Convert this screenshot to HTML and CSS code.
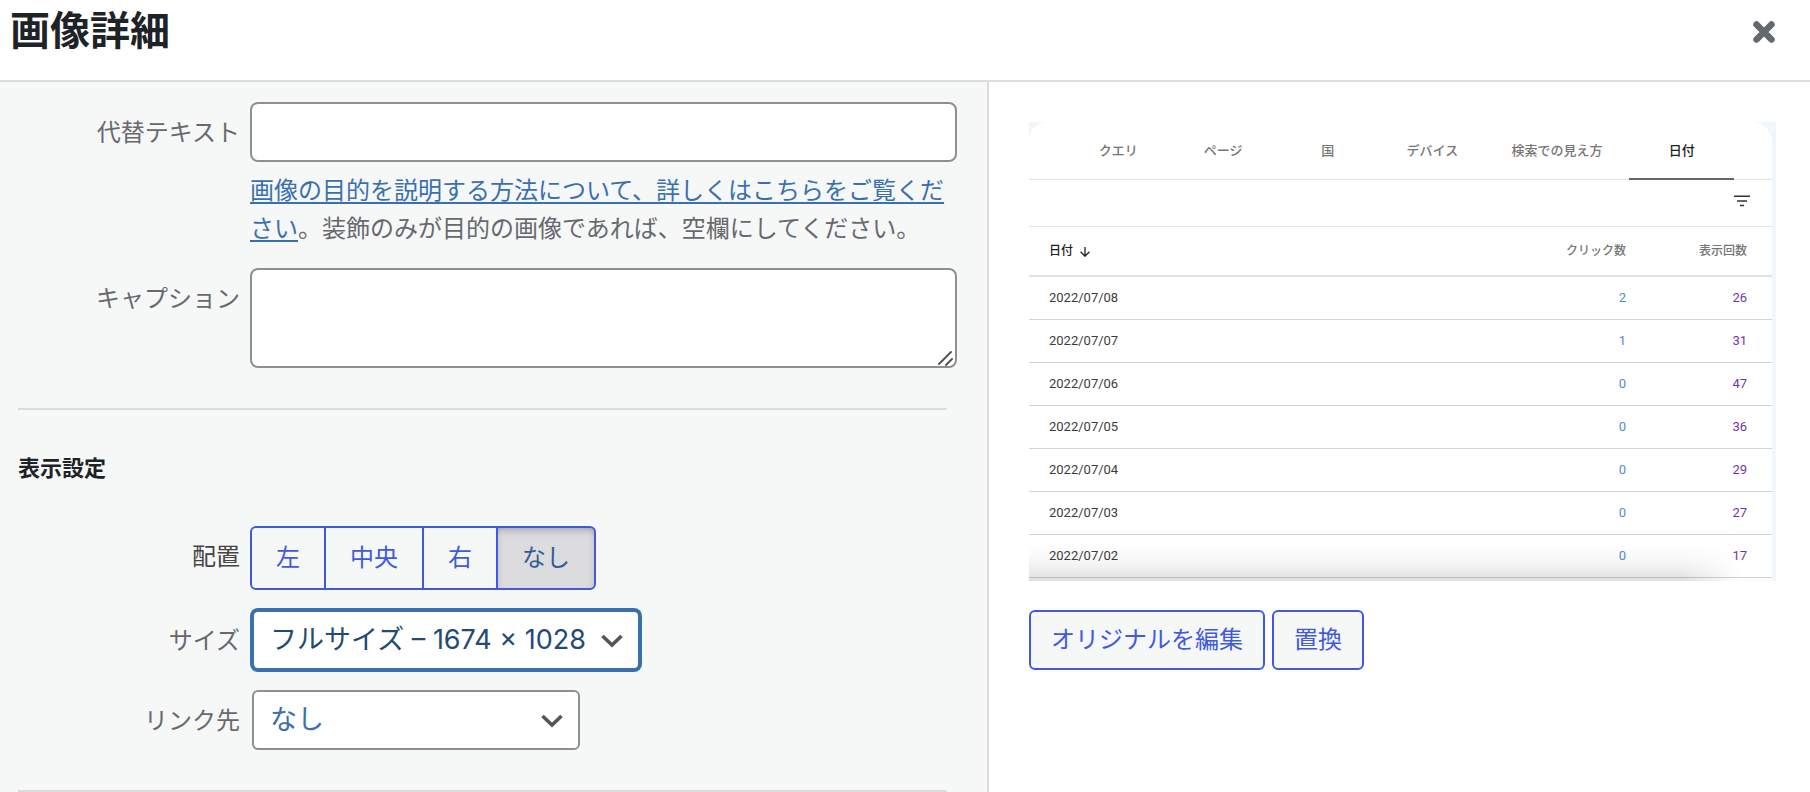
FILE: index.html
```html
<!DOCTYPE html>
<html lang="ja">
<head>
<meta charset="utf-8">
<meta name="viewport" content="width=device-width, initial-scale=1">
<title>画像詳細</title>
<link rel="stylesheet" href="styles.css">
</head>
<body>
<div class="modal">
  <header class="modal-header">
    <h1 class="modal-title">画像詳細</h1>
    <button class="modal-close" type="button" aria-label="閉じる">
      <svg viewBox="0 0 22 22" width="22" height="22" aria-hidden="true"><path d="M3.5 3.5l15 15M18.5 3.5l-15 15" fill="none" stroke="currentColor" stroke-width="5"/><path d="M3.5 3.5l15 15M18.5 3.5l-15 15" fill="none" stroke="currentColor" stroke-width="6.5" stroke-linecap="round"/></svg>
    </button>
  </header>
  <div class="modal-body">
    <form class="settings">
      <div class="field">
        <label class="field-label" for="alt">代替テキスト</label>
        <div class="field-control">
          <input class="text-input" id="alt" type="text">
          <p class="help"><a class="help-link" href="#">画像の目的を説明する方法について、詳しくはこちらをご覧ください</a>。装飾のみが目的の画像であれば、空欄にしてください。</p>
        </div>
      </div>
      <div class="field">
        <label class="field-label" for="caption">キャプション</label>
        <div class="field-control textarea-wrap">
          <textarea class="text-area" id="caption"></textarea>
          <svg class="grip" viewBox="0 0 16 16" width="16" height="16" aria-hidden="true"><path d="M2 14 14 2M9 15 15 9" fill="none" stroke="currentColor" stroke-width="2" stroke-linecap="round"/></svg>
        </div>
      </div>
      <hr class="divider">
      <h2 class="section-title">表示設定</h2>
      <div class="field">
        <span class="field-label field-label-dark" id="align-label">配置</span>
        <div class="button-group" role="group" aria-labelledby="align-label">
          <button class="group-button" type="button">左</button>
          <button class="group-button" type="button">中央</button>
          <button class="group-button" type="button">右</button>
          <button class="group-button group-button-active" type="button" aria-pressed="true">なし</button>
        </div>
      </div>
      <div class="field">
        <label class="field-label" for="size">サイズ</label>
        <div class="select-wrap">
          <select class="select select-size" id="size"><option>フルサイズ – 1674 × 1028</option></select>
          <svg class="chevron" viewBox="0 0 22 14" width="22" height="14" aria-hidden="true"><path d="M1.5 2 11 11 20.500 2" fill="none" stroke="currentColor" stroke-width="3.6"/></svg>
        </div>
      </div>
      <div class="field">
        <label class="field-label" for="link">リンク先</label>
        <div class="select-wrap">
          <select class="select select-link" id="link"><option>なし</option></select>
          <svg class="chevron" viewBox="0 0 22 14" width="22" height="14" aria-hidden="true"><path d="M1.5 2 11 11 20.500 2" fill="none" stroke="currentColor" stroke-width="3.6"/></svg>
        </div>
      </div>
      <hr class="divider">
    </form>
    <section class="preview">
      <figure class="shot">
        <div class="shot-card">
          <div class="tabs">
            <span class="tab">クエリ</span>
            <span class="tab">ページ</span>
            <span class="tab">国</span>
            <span class="tab">デバイス</span>
            <span class="tab tab-wide">検索での見え方</span>
            <span class="tab tab-active">日付</span>
          </div>
          <div class="filter-row">
            <svg viewBox="0 0 16 12" width="16" height="12" aria-hidden="true"><path d="M0 1.300h16M3 6h10M6 10.500h4" fill="none" stroke="currentColor" stroke-width="1.600"/></svg>
          </div>
          <table class="stats">
            <thead>
              <tr>
                <th class="col-date">日付 <svg class="sort" viewBox="0 0 10 10" width="10" height="10" aria-hidden="true"><path d="M5 0v9M.6 4.800 5 9.200l4.400-4.400" fill="none" stroke="currentColor" stroke-width="1.300"/></svg></th>
                <th class="col-clicks">クリック数</th>
                <th class="col-views">表示回数</th>
              </tr>
            </thead>
            <tbody>
              <tr><td>2022/07/08</td><td class="clicks">2</td><td class="views">26</td></tr>
              <tr><td>2022/07/07</td><td class="clicks">1</td><td class="views">31</td></tr>
              <tr><td>2022/07/06</td><td class="clicks">0</td><td class="views">47</td></tr>
              <tr><td>2022/07/05</td><td class="clicks">0</td><td class="views">36</td></tr>
              <tr><td>2022/07/04</td><td class="clicks">0</td><td class="views">29</td></tr>
              <tr><td>2022/07/03</td><td class="clicks">0</td><td class="views">27</td></tr>
              <tr><td>2022/07/02</td><td class="clicks">0</td><td class="views">17</td></tr>
            </tbody>
          </table>
          <div class="shot-shade"></div>
        </div>
      </figure>
      <div class="actions">
        <button class="action" type="button">オリジナルを編集</button>
        <button class="action" type="button">置換</button>
      </div>
    </section>
  </div>
</div>
</body>
</html>
```
FILE: styles.css
```css
* {
  box-sizing: border-box;
}

body {
  margin: 0;
  background: #fff;
  color: #1d2327;
  font-family: Inter, "Noto Sans CJK JP", sans-serif;
  font-size: 24px;
  line-height: 38px;
}

button,
input,
textarea,
select {
  font: inherit;
}

.modal {
  display: flex;
  flex-direction: column;
  min-height: 100vh;
}

.modal-header {
  display: flex;
  align-items: flex-start;
  justify-content: space-between;
  height: 82px;
  padding: 0 32px 0 10px;
  border-bottom: 2px solid #dcdcdc;
}

.modal-title {
  margin: 0;
  font-size: 40px;
  font-weight: 700;
  line-height: 62px;
}

.modal-close {
  display: flex;
  margin-top: 18px;
  padding: 3px;
  border: 0;
  background: none;
  color: #646970;
}

.modal-body {
  display: grid;
  flex: 1;
  grid-template-columns: minmax(0, 989fr) minmax(0, 821fr);
}

.settings {
  padding-top: 20px;
  border-right: 2px solid #dcdcdc;
  background: #f6f8f7;
}

.field {
  display: grid;
  grid-template-columns: 240px 1fr;
  column-gap: 10px;
  align-items: start;
  margin: 0 30px 20px 0;
}

.field-label {
  margin-top: 12px;
  color: #67696f;
  text-align: right;
}

.field-label-dark {
  color: #444;
}

.text-input,
.text-area {
  display: block;
  width: 100%;
  border: 2px solid #8d8f94;
  border-radius: 8px;
  background: #fff;
  outline: 0;
}

.text-input {
  height: 60px;
  padding: 0 16px;
}

.text-area {
  height: 100px;
  padding: 4px 12px;
  resize: none;
}

.textarea-wrap,
.select-wrap {
  position: relative;
}

.grip {
  position: absolute;
  right: 4px;
  bottom: 2px;
  color: #555;
  pointer-events: none;
}

.help {
  margin: 10px 0 0;
  color: #67696f;
}

.help-link {
  color: #3a70b0;
  text-decoration-thickness: 2px;
  text-underline-offset: 3px;
}

.divider {
  height: 2px;
  margin: 40px 40px 0 18px;
  border: 0;
  background: #dcdcdc;
}

.section-title {
  margin: 38px 0 38px 18px;
  font-size: 22px;
  font-weight: 700;
  line-height: 40px;
}

.button-group {
  display: flex;
}

.group-button {
  height: 64px;
  padding: 0 24px;
  border: 2px solid #4059e0;
  background: #f6f8f7;
  color: #4059e0;
}

.group-button + .group-button {
  margin-left: -2px;
}

.group-button:first-child {
  border-radius: 6px 0 0 6px;
}

.group-button:last-child {
  border-radius: 0 6px 6px 0;
}

.group-button-active {
  background: #dcdcde;
  box-shadow: inset 0 4px 10px -4px #888;
  color: #315e92;
}

.select-wrap {
  justify-self: start;
  margin-left: 2px;
}

.select {
  display: block;
  height: 60px;
  padding: 0 40px 0 16px;
  appearance: none;
  border: 2px solid #8d8f94;
  border-radius: 6px;
  background: #fff;
  color: #3a70b0;
  font-size: 27px;
}

.select-size {
  width: 388px;
  border-color: #3a70b0;
  box-shadow: 0 0 0 2px #3a70b0;
  color: #214a75;
}

.select-link {
  width: 328px;
}

.chevron {
  position: absolute;
  top: 24px;
  right: 17px;
  color: #555;
  pointer-events: none;
}

.preview {
  padding: 40px 34px 0 40px;
}

.shot {
  margin: 0;
  padding-right: 4px;
  background: #f1f6fb;
}

.shot-card {
  position: relative;
  height: 459px;
  overflow: hidden;
  border-radius: 18px 20px 0 0;
  background: #fff;
  font-family: Roboto, "Noto Sans CJK JP", sans-serif;
}

.tabs {
  display: flex;
  height: 58px;
  padding: 0 38px 0 37px;
  border-bottom: 1px solid #e4e4e4;
}

.tab {
  flex: 21 1 0;
  height: 58px;
  color: #757575;
  font-size: 13px;
  font-weight: 500;
  line-height: 58px;
  text-align: center;
  white-space: nowrap;
}

.tab-wide {
  flex-grow: 29;
}

.tab-active {
  border-bottom: 2px solid #666;
  color: #212121;
}

.filter-row {
  display: flex;
  justify-content: flex-end;
  height: 47px;
  padding: 15px 22px 0 0;
  border-bottom: 1px solid #e4e4e4;
  color: #333;
}

.stats {
  width: 100%;
  border-collapse: separate;
  border-spacing: 0;
  table-layout: fixed;
  line-height: 20px;
}

.stats th {
  height: 50px;
  padding: 0;
  border-bottom: 2px solid #e2e2e2;
  color: #757575;
  font-size: 12px;
  font-weight: 500;
  text-align: right;
}

.stats td {
  height: 43px;
  padding: 0;
  border-bottom: 1px solid #d4d4d4;
  color: #3c3c3c;
  font-size: 13px;
  text-align: right;
}

.stats th:first-child,
.stats td:first-child {
  padding-left: 20px;
  text-align: left;
}

.stats th:last-child,
.stats td:last-child {
  padding-right: 25px;
}

.stats .col-date {
  color: #212121;
}

.col-clicks {
  width: 160px;
}

.col-views {
  width: 146px;
}

.stats .clicks {
  color: #4f8ada;
}

.stats .views {
  color: #7731ad;
}

.sort {
  margin-left: 4px;
  vertical-align: -2px;
}

.shot-shade {
  position: absolute;
  right: 0;
  bottom: 0;
  left: 0;
  height: 36px;
  background: linear-gradient(rgba(0, 0, 0, 0), rgba(0, 0, 0, 0.04) 50%, rgba(0, 0, 0, 0.12));
  mask-image: linear-gradient(to right, #000 88%, transparent 96%);
}

.actions {
  display: flex;
  gap: 7px;
  margin-top: 29px;
}

.action {
  height: 60px;
  padding: 0 20px;
  border: 2px solid #4059e0;
  border-radius: 6px;
  background: #f6f8f7;
  color: #4059e0;
}
```
